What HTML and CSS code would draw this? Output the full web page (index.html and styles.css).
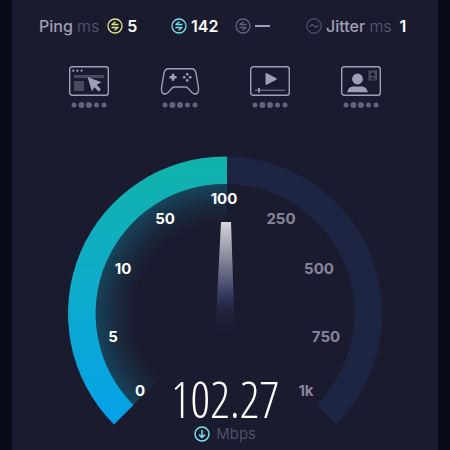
FILE: index.html
```html
<!DOCTYPE html>
<html lang="en">
<head>
<meta charset="utf-8">
<meta name="viewport" content="width=device-width, initial-scale=1">
<title>Speed test</title>
<link rel="stylesheet" href="styles.css">
</head>
<body>
<svg class="defs" aria-hidden="true">
  <symbol id="swap" viewBox="0 0 16 16">
    <circle cx="8" cy="8" r="7" fill="none" stroke="currentColor" stroke-width="1.3"/>
    <path d="M11.500 6.500H5L8.500 3.800M4.500 9.500H11L7.500 12.200" fill="none" stroke="currentColor" stroke-width="1.300" stroke-linejoin="round"/>
  </symbol>
  <symbol id="dots" viewBox="0 0 36 6">
    <g fill="#646379"><circle cx="3" cy="3" r="2.5"/><circle cx="10.4" cy="3" r="3"/><circle cx="18" cy="3" r="3"/><circle cx="25.5" cy="3" r="2.5"/><circle cx="33" cy="3" r="2.5"/></g>
  </symbol>
</svg>
<main class="panel">
  <section class="stats">
    <div class="stat"><span class="name">Ping <span class="unit">ms</span></span><svg class="badge idle"><use href="#swap"/></svg><b>5</b></div>
    <div class="stat"><svg class="badge down"><use href="#swap"/></svg><b>142</b></div>
    <div class="stat"><svg class="badge muted"><use href="#swap"/></svg><span class="dash"></span></div>
    <div class="stat"><svg class="badge muted" viewBox="0 0 16 16"><circle cx="8" cy="8" r="7.2" fill="none" stroke="currentColor"/><path d="M4 8.8C5 6.2 7 6.4 8 8S11 9.8 12 7.2" fill="none" stroke="currentColor" stroke-width="1.2"/></svg><span class="name">Jitter <span class="unit">ms</span></span><b class="last">1</b></div>
  </section>
  <section class="uses">
    <div class="use">
      <svg class="pict" viewBox="0 0 40 30"><rect x=".7" y=".7" width="38.6" height="28.6" rx="2.5" class="line"/><g fill="#a09fb5"><circle cx="4.3" cy="4.7" r="1.1"/><circle cx="8.4" cy="4.7" r="1.1"/><circle cx="12.6" cy="4.7" r="1.1"/></g><path d="M5 9h30v3H5zM5 15h10v10H5z" fill="#4b4a5f"/><path d="M18.5 11L32.5 16.3L27.6 18.8L32 23.2L29.7 25.4L25.4 21.2L23 25.5Z" fill="#a09fb5"/></svg>
      <svg class="dots"><use href="#dots"/></svg>
    </div>
    <div class="use">
      <svg class="pict" viewBox="0 0 40 30"><path d="M8.500 2.700H31.500C34 2.700 35.200 4 35.800 6.500L38.400 21C39.300 26 37 28.300 34.500 28C30.500 27.300 29 21 26 21H14C11 21 9.500 27.300 5.500 28C3 28.300 .7 26 1.600 21L4.200 6.500C4.800 4 6 2.700 8.500 2.700Z" class="line"/><path d="M11.700 7.800h2.600V10h2.200v2.600h-2.200v2.200h-2.600v-2.200H9.500V10h2.200z" fill="#a09fb5"/><g fill="#a09fb5"><circle cx="27.2" cy="8.2" r="1.3"/><circle cx="27.2" cy="14.4" r="1.3"/><circle cx="24.2" cy="11.3" r="1.3"/><circle cx="30.2" cy="11.3" r="1.3"/></g></svg>
      <svg class="dots"><use href="#dots"/></svg>
    </div>
    <div class="use">
      <svg class="pict" viewBox="0 0 40 30"><rect x=".7" y=".7" width="38.6" height="28.6" rx="2.5" class="line"/><path d="M16.3 7.800L26 13L16.300 18.200Z" fill="#a09fb5" stroke="#a09fb5" stroke-width="1.5" stroke-linejoin="round"/><path d="M5 24.300H35" stroke="#62617a" stroke-width="1.5"/><path d="M9 22v4.500" stroke="#a09fb5" stroke-width="1.8"/></svg>
      <svg class="dots"><use href="#dots"/></svg>
    </div>
    <div class="use">
      <svg class="pict" viewBox="0 0 40 30"><rect x=".7" y=".7" width="38.6" height="28.6" rx="2.5" class="line"/><circle cx="16.5" cy="13" r="5.4" fill="#a09fb5"/><path d="M6.300 26.300C6.800 22.500 9 20.400 13 20.400H20C24 20.400 26.200 22.500 26.700 26.300Z" fill="#a09fb5"/><rect x="27.5" y="4.500" width="8.500" height="10" fill="#4b4a5f"/><circle cx="31.800" cy="8.600" r="2" fill="#1b1b2f"/><path d="M29 13.300q2.800-3.800 5.600 0z" fill="#1b1b2f"/></svg>
      <svg class="dots"><use href="#dots"/></svg>
    </div>
  </section>
  <section class="gauge">
    <svg class="dial" viewBox="12 140 426 310" role="img" aria-label="Speed gauge">
      <defs>
        <linearGradient id="arc" gradientUnits="userSpaceOnUse" x1="0" y1="157" x2="0" y2="424"><stop offset="0" stop-color="#12b2aa"/><stop offset=".45" stop-color="#0fadc8"/><stop offset="1" stop-color="#03a1e8"/></linearGradient>
        <radialGradient id="glow" gradientUnits="userSpaceOnUse" cx="225" cy="313.5" r="130"><stop offset=".7" stop-color="#0f8ea8" stop-opacity="0"/><stop offset=".85" stop-color="#0f8ea8" stop-opacity=".14"/><stop offset="1" stop-color="#0f8ea8" stop-opacity=".36"/></radialGradient>
        <linearGradient id="needle" x1="0" y1="0" x2="0" y2="1"><stop offset="0" stop-color="#d6d5dd"/><stop offset=".3" stop-color="#8c8b9f"/><stop offset=".62" stop-color="#353b61"/><stop offset=".75" stop-color="#242846" stop-opacity=".8"/><stop offset="1" stop-color="#1b1b2f" stop-opacity="0"/></linearGradient>
      </defs>
      <path d="M227 156.500A157 157 0 0 1 336 424.500L316.500 405A129.500 129.500 0 0 0 227 184Z" fill="#1e2543"/>
      <path d="M225 313.500L133.500 405A129.500 129.500 0 0 1 227 184V313.500Z" fill="url(#glow)"/>
      <path d="M227 156.500A157 157 0 0 0 114 424.500L133.500 405A129.500 129.500 0 0 1 227 184Z" fill="url(#arc)"/>
      <path d="M221 222H231L235 338H215Z" fill="url(#needle)"/>
      <g class="marks">
        <text x="140" y="396">0</text><text x="113" y="342">5</text><text x="123" y="274">10</text><text x="165" y="224">50</text><text x="224" y="204">100</text>
        <g class="off"><text x="281" y="224">250</text><text x="319" y="274">500</text><text x="326" y="342">750</text><text x="306" y="396">1k</text></g>
      </g>
    </svg>
    <div class="readout">
      <div class="speed">102.27</div>
      <div class="scale"><svg class="badge down" viewBox="0 0 16 16"><circle cx="8" cy="8" r="7" fill="none" stroke="currentColor" stroke-width="1.500"/><path d="M8 4v7.500M5 8.600L8 11.500L11 8.600" fill="none" stroke="currentColor" stroke-width="1.500"/></svg>Mbps</div>
    </div>
  </section>
</main>
</body>
</html>
```
FILE: styles.css
```css
* { box-sizing: border-box; }
body {
  margin: 0;
  padding: 0 12px;
  background: #080a18;
  font-family: Inter, "Open Sans", sans-serif;
  color: #fff;
}
.defs { position: absolute; width: 0; height: 0; }
.panel { background: #1b1b2f; min-height: 100vh; }
.stats {
  display: grid;
  grid-template-columns: 132fr 64fr 71fr 132fr;
  padding: 16px 0 0 27px;
  font-size: 16px;
  line-height: 20px;
}
.stat { display: flex; align-items: center; gap: 4px; white-space: nowrap; }
.stat b { font-weight: 600; }
.name { color: #a09fb5; font-weight: 500; }
.unit { color: #5b5a70; font-weight: 300; }
.badge { width: 16px; height: 16px; flex: none; }
.name + .badge { margin-left: 4px; }
.idle { color: #e3e58b; }
.down { color: #74e2e8; }
.muted { color: #62617a; }
.dash { width: 15px; height: 2px; background: #a09fb5; }
.last { margin-left: 4px; }
.uses {
  display: grid;
  grid-template-columns: repeat(4, 1fr);
  padding: 30px 32px 0;
}
.use { display: flex; flex-direction: column; align-items: center; gap: 6px; }
.pict { width: 40px; height: 30px; }
.line { fill: none; stroke: #a09fb5; stroke-width: 1.4; }
.dots { width: 36px; height: 6px; }
.gauge { display: grid; padding-top: 32px; }
.dial, .readout { grid-area: 1 / 1; }
.dial { display: block; width: 100%; }
.marks { font-size: 15px; font-weight: 700; fill: #fff; text-anchor: middle; }
.off { fill: #86859a; }
.readout { align-self: end; text-align: center; padding-bottom: 6px; }
.speed {
  font-family: "Open Sans Condensed Light", "Roboto Condensed", sans-serif;
  font-weight: 100;
  font-size: 49px;
  line-height: 50px;
}
.scale {
  display: flex;
  justify-content: center;
  align-items: center;
  gap: 6px;
  font-size: 15px;
  line-height: 20px;
  font-weight: 300;
  color: #5b5a70;
}
```
